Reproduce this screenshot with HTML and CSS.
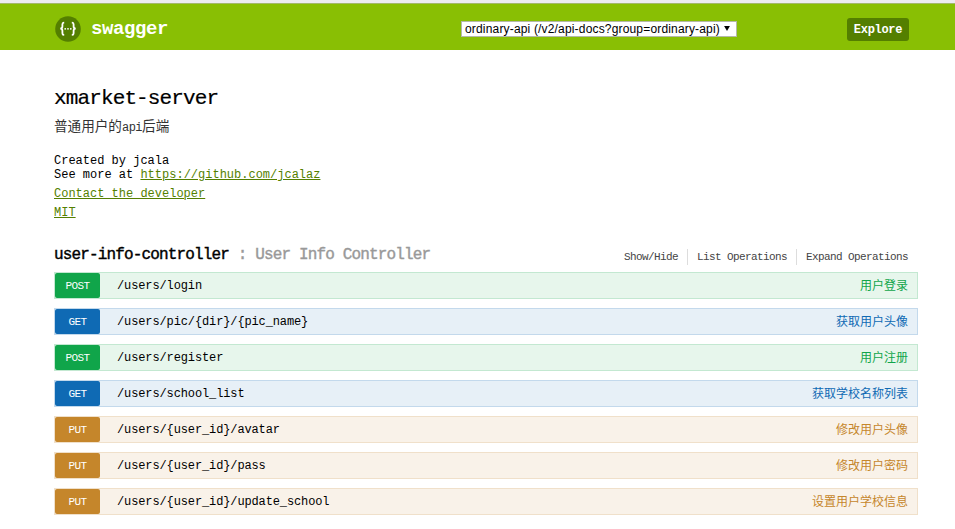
FILE: index.html
```html
<!DOCTYPE html>
<html lang="zh-CN">
<head>
<meta charset="utf-8">
<title>Swagger UI</title>
<link rel="stylesheet" href="styles.css">
</head>
<body>
<header class="topbar">
  <a class="logo">
    <svg class="logo-mark" width="26" height="26" viewBox="0 0 26 26">
      <circle cx="13" cy="13" r="12.8" fill="#547f00"/>
      <g fill="none" stroke="#fff" stroke-width="1.8">
        <path d="M9.2 6.6H8.8Q7.4 6.6 7.4 8.2V10.6Q7.4 12.6 5.3 12.7Q7.4 12.8 7.4 14.8V17.2Q7.4 18.8 8.8 18.8H9.2"/>
        <path d="M16.8 6.6H17.2Q18.6 6.6 18.6 8.2V10.6Q18.6 12.6 20.7 12.7Q18.6 12.8 18.6 14.8V17.2Q18.6 18.8 17.2 18.8H16.8"/>
      </g>
      <g fill="#fff"><circle cx="10.2" cy="12.8" r=".9"/><circle cx="13" cy="12.8" r=".9"/><circle cx="15.8" cy="12.8" r=".9"/></g>
    </svg>
    <span class="logo-text">swagger</span>
  </a>
  <div class="picker"><span>ordinary-api (/v2/api-docs?group=ordinary-api)</span><svg width="6" height="5" viewBox="0 0 7 6"><path d="M0 0H7L3.5 6Z"/></svg></div>
  <button class="explore">Explore</button>
</header>
<main class="page">
  <section class="info">
    <h1>xmarket-server</h1>
    <p class="summary">普通用户的<span class="latin">api</span>后端</p>
    <div class="line">Created by jcala</div>
    <div class="line">See more at <a>https://github.com/jcalaz</a></div>
    <div class="line link"><a>Contact the developer</a></div>
    <div class="line link"><a>MIT</a></div>
  </section>
  <div class="heading">
    <h2>user-info-controller <span>: User Info Controller</span></h2>
    <ul class="options"><li>Show/Hide</li><li>List Operations</li><li>Expand Operations</li></ul>
  </div>
  <div class="operations">
    <div class="op post"><b>POST</b><code>/users/login</code><span>用户登录</span></div>
    <div class="op get"><b>GET</b><code>/users/pic/{dir}/{pic_name}</code><span>获取用户头像</span></div>
    <div class="op post"><b>POST</b><code>/users/register</code><span>用户注册</span></div>
    <div class="op get"><b>GET</b><code>/users/school_list</code><span>获取学校名称列表</span></div>
    <div class="op put"><b>PUT</b><code>/users/{user_id}/avatar</code><span>修改用户头像</span></div>
    <div class="op put"><b>PUT</b><code>/users/{user_id}/pass</code><span>修改用户密码</span></div>
    <div class="op put"><b>PUT</b><code>/users/{user_id}/update_school</code><span>设置用户学校信息</span></div>
  </div>
</main>
</body>
</html>
```
FILE: styles.css
```css
* { box-sizing: border-box; }
body {
  margin: 0;
  height: 529px;
  overflow: hidden;
  background: #fff;
  color: #000;
  border-top: 3px solid #ececf1;
  font: 12px/14px "Liberation Mono", "Noto Sans CJK SC", monospace;
}
h1, h2, p, ul { margin: 0; padding: 0; }

.topbar {
  display: flex;
  align-items: center;
  height: 47px;
  padding: 3px 46px 0 55px;
  background: #89bf04;
  border-top: 1px solid #a3b86c;
}
.logo { display: flex; align-items: center; width: 406px; color: #fff; }
.logo-mark { margin-right: 10px; }
.logo-text { font-size: 19px; font-weight: bold; letter-spacing: -.4px; line-height: 24px; }
.picker {
  display: flex;
  align-items: center;
  justify-content: space-between;
  width: 276px;
  height: 16px;
  padding: 0 6px 0 3px;
  background: #fff;
  border: 1px solid #b5b9a8;
  font: 12px/14px "Liberation Sans", Arial, sans-serif;
  letter-spacing: .17px;
  white-space: nowrap;
}
.explore {
  width: 62px;
  height: 23px;
  margin: 2px 0 0 auto;
  padding: 0;
  border: 0;
  border-radius: 3px;
  background: #547f00;
  color: #fff;
  font: bold 12px "Liberation Mono", monospace;
  letter-spacing: -.3px;
}

.page { padding: 36px 37px 0 54px; }
h1 { font-size: 21px; font-weight: normal; line-height: 26px; letter-spacing: -.87px; -webkit-text-stroke: .2px #000; }
.summary { height: 20px; margin: 6px 0 16px; color: #333; font-size: 13.6px; line-height: 20px; }
.latin { font-size: 12px; letter-spacing: -.5px; }
.line { height: 14px; white-space: pre; }
.link { height: 19px; padding-top: 5px; }
.info a { color: #547f00; text-decoration: underline; }

.heading { display: flex; justify-content: space-between; align-items: flex-start; height: 34px; margin-top: 18px; }
h2 { padding-top: 7px; font-size: 16px; font-weight: normal; line-height: 20px; letter-spacing: -.85px; -webkit-text-stroke: .4px currentColor; white-space: nowrap; }
h2 span { color: #999; }
.options { display: flex; padding: 11px 10px 0 0; list-style: none; color: #444; font-size: 11px; letter-spacing: -.6px; white-space: nowrap; }
.options li { height: 16px; line-height: 17px; }
.options li + li { margin-left: 9px; padding-left: 9px; border-left: 1px solid #ddd; }

.operations { display: grid; gap: 9px; }
.op { display: flex; height: 27px; padding-right: 9px; border: 1px solid; }
.op b { width: 45px; height: 25px; border-radius: 2px; color: #fff; font-size: 11px; font-weight: normal; letter-spacing: -.6px; line-height: 27px; text-align: center; }
.op code { flex: 1; padding-left: 17px; font: 12px/27px "Liberation Mono", monospace; letter-spacing: -.12px; }
.op span { font-size: 12px; line-height: 28px; }
.post { background: #e7f6ec; border-color: #c3e8d1; color: #10a54a; }
.get { background: #e7f0f7; border-color: #c3d9ec; color: #0f6ab4; }
.put { background: #f9f2e9; border-color: #f0e0ca; color: #c5862b; }
.op code { color: #000; }
.post b { background: #10a54a; }
.get b { background: #0f6ab4; }
.put b { background: #c5862b; }
```
